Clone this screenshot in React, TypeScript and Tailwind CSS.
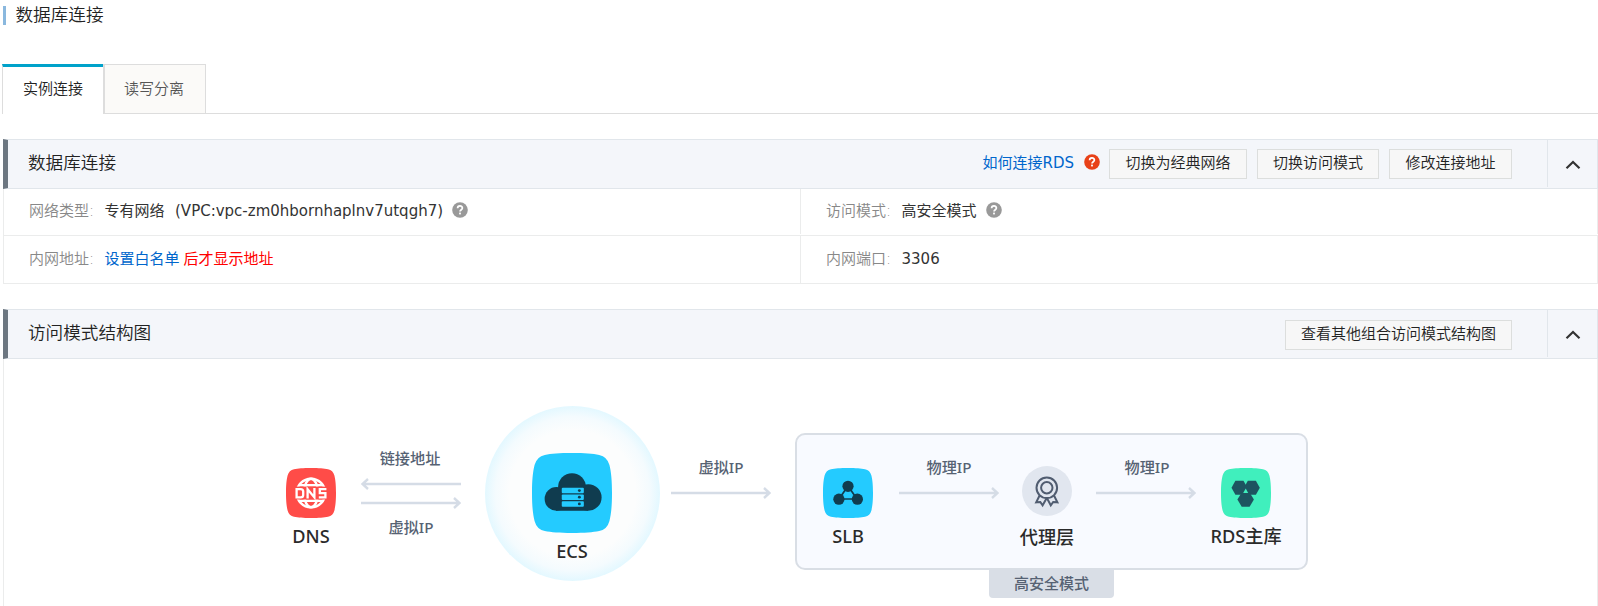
import React from "react";

const SQUIRCLE =
  "M25 0C33 0 38 .4 42 1.2Q47 2.2 48.4 7.5C49.5 12 50 17 50 25C50 33 49.5 38 48.4 42.5Q47 47.8 42 48.8C38 49.6 33 50 25 50C17 50 12 49.6 8 48.8Q3 47.8 1.6 42.5C.5 38 0 33 0 25C0 17 .5 12 1.6 7.5Q3 2.2 8 1.2C12 .4 17 0 25 0Z";

const CANVAS_FONT = "font-['Noto_Sans','Noto_Sans_CJK_SC',sans-serif]";

function HelpIcon({ className }: { className: string }) {
  return (
    <svg viewBox="0 0 16 16" className={`size-4 shrink-0 ${className}`}>
      <circle cx="8" cy="8" r="7.8" fill="currentColor" />
      <path d="M5.6 6.3C5.6 3.2 10.4 3.2 10.4 6.1C10.4 7.7 8 7.8 8 9.6" fill="none" stroke="#fff" strokeWidth="1.7" />
      <rect x="7.1" y="10.6" width="1.8" height="1.8" fill="#fff" />
    </svg>
  );
}

function Button({ children, className = "" }: { children: React.ReactNode; className?: string }) {
  return (
    <button className={`flex h-[30px] items-center justify-center border border-[#dcdedd] bg-[#f7f7f7] pb-[2px] text-[15px] font-[350] whitespace-nowrap text-[#222] ${className}`}>
      {children}
    </button>
  );
}

function Panel({ title, actions, children }: { title: string; actions: React.ReactNode; children: React.ReactNode }) {
  return (
    <section>
      <header className="flex h-[50px] border-y border-r border-l-5 border-y-[#e1e6eb] border-r-[#e1e6eb] border-l-[#6d7781] bg-[#f4f6fa]">
        <h2 className="flex-1 pt-[10px] pl-5 text-[17.6px] leading-[26px] font-[350] text-[#222]">{title}</h2>
        <div className="mr-[35px] flex items-center">{actions}</div>
        <div className="mb-px flex w-[50px] items-center justify-center border-l border-[#e1e6eb] pt-[2px]">
          <svg viewBox="0 0 16 9" className="h-[9px] w-4" fill="none" stroke="#333" strokeWidth="2.2">
            <path d="M1.5 8.2L8 2L14.5 8.2" />
          </svg>
        </div>
      </header>
      {children}
    </section>
  );
}

function Cell({ label, children }: { label: string; children: React.ReactNode }) {
  return (
    <div className="flex flex-1 items-center border-r border-[#ebecec] pl-[25px] text-[15px] text-[#333]">
      <span className="w-[75.5px] font-[350] text-[#888]">{label}</span>
      {children}
    </div>
  );
}

function Arrow({ className, flip = false }: { className: string; flip?: boolean }) {
  return (
    <svg viewBox="0 0 100 12" className={`absolute h-3 w-[100px] ${flip ? "rotate-180" : ""} ${className}`} fill="none" stroke="#d5dce6" strokeWidth="2.4">
      <path d="M0 6H98M93 1L98.5 6L93 11" />
    </svg>
  );
}

function ArrowLabel({ children, className }: { children: string; className: string }) {
  return (
    <span className={`absolute w-[100px] text-center text-[15.2px] leading-5 font-medium text-[#566273] ${className}`}>{children}</span>
  );
}

function Node({ name, className, children }: { name: string; className: string; children: React.ReactNode }) {
  return (
    <div className={`absolute flex w-[100px] flex-col items-center ${className}`}>
      {children}
      <span className="mt-[5px] text-[18.2px] leading-[26px] font-medium whitespace-nowrap text-[#2a2a2a]">{name}</span>
    </div>
  );
}

function DnsIcon() {
  return (
    <svg viewBox="0 0 50 50" className="size-[50px]">
      <path d={SQUIRCLE} fill="#ff4c48" />
      <g fill="none" stroke="#fff" strokeWidth="2.4">
        <circle cx="25" cy="25" r="14.3" />
        <ellipse cx="25" cy="25" rx="7" ry="14.3" />
        <path d="M13 17.2H37M13 32.8H37" />
      </g>
      <rect x="8" y="18.6" width="34" height="12.9" fill="#ff4c48" />
      <path d="M10.6 21.2H14.6Q17.2 21.2 17.2 23.6V27Q17.2 29.4 14.6 29.4H10.6ZM21.6 30.6V21.2L28.4 29.4V20M40.4 21.2H33.8V25.2H39.4V29.4H32.8" fill="none" stroke="#fff" strokeWidth="2.3" />
    </svg>
  );
}

function EcsIcon() {
  return (
    <svg viewBox="0 0 50 50" className="size-[80px]">
      <path d={SQUIRCLE} fill="#24cbff" />
      <g fill="#103c4f">
        <circle cx="15.3" cy="28.7" r="7.4" />
        <circle cx="25" cy="21.3" r="8.7" />
        <circle cx="35.2" cy="27.8" r="8.3" />
        <rect x="15" y="22" width="20" height="14.1" />
      </g>
      <g fill="#24cbff">
        <rect x="18.6" y="21.7" width="13.8" height="3.5" rx=".6" />
        <rect x="18.6" y="26" width="13.8" height="3.3" rx=".6" />
        <rect x="18.6" y="30.1" width="13.8" height="3.5" rx=".6" />
      </g>
      <g fill="#103c4f">
        <circle cx="29.6" cy="23.5" r=".9" />
        <circle cx="29.6" cy="27.6" r=".9" />
        <circle cx="29.6" cy="31.8" r=".9" />
      </g>
    </svg>
  );
}

function SlbIcon() {
  return (
    <svg viewBox="0 0 50 50" className="size-[50px]">
      <path d={SQUIRCLE} fill="#24cbff" />
      <path d="M25 18L16 31H34Z" fill="none" stroke="#103c4f" strokeWidth="1.7" />
      <g fill="#103c4f">
        <circle cx="25" cy="18.3" r="5.6" />
        <circle cx="15.9" cy="31.2" r="5.6" />
        <circle cx="34.4" cy="31.2" r="5.6" />
      </g>
    </svg>
  );
}

function ProxyIcon() {
  return (
    <svg viewBox="0 0 50 50" className="size-[50px]">
      <circle cx="25" cy="25" r="25" fill="#e1e6ef" />
      <g fill="none" stroke="#505c70" strokeWidth="2">
        <path d="M17.6 29.5L14.2 36.3L18.3 36L20.6 39.3L24.2 33H25.4L28.8 39.3L31.2 36L35.4 36.3L32 29.5" />
        <circle cx="24.8" cy="21.8" r="10.3" fill="#e1e6ef" />
        <circle cx="24.8" cy="21.8" r="5.7" />
      </g>
    </svg>
  );
}

function RdsIcon() {
  return (
    <svg viewBox="0 0 50 50" className="size-[50px]">
      <path d={SQUIRCLE} fill="#40efbd" />
      <g fill="#1d5460">
        <path d="M14.4 12.8H22.5L26.4 19.7L22.5 26.7H14.4L10.5 19.7Z" />
        <path d="M26.8 12.8H34.9L38.8 19.7L34.9 26.7H26.8L22.9 19.7Z" />
        <path d="M20.7 24.4H28.6L32.9 31.6L28.6 38.7H20.7L16.4 31.6Z" />
      </g>
      <path d="M24.7 20.4L27.2 25H22.2Z" fill="#40efbd" />
    </svg>
  );
}

function AccessDiagram() {
  return (
    <div className={`relative h-[247px] border-x border-[#ebecec] ${CANVAS_FONT}`}>
      <Node name="DNS" className="top-[109px] left-[257px]"><DnsIcon /></Node>
      <ArrowLabel className="top-[89px] left-[356px]">链接地址</ArrowLabel>
      <Arrow flip className="top-[119px] left-[357px]" />
      <Arrow className="top-[138px] left-[357px]" />
      <ArrowLabel className="top-[158px] left-[357px]">虚拟IP</ArrowLabel>

      <div className="absolute top-[47px] left-[481px] size-[175px] rounded-full bg-[radial-gradient(closest-side,#fcfdfd_72%,#f4fbfe_88%,#e3f8ff_100%)]" />
      <Node name="ECS" className="top-[94px] left-[518px]"><EcsIcon /></Node>

      <ArrowLabel className="top-[98px] left-[667px]">虚拟IP</ArrowLabel>
      <Arrow className="top-[128px] left-[667px]" />

      <div className="absolute top-[74px] left-[791px] h-[137px] w-[513px] rounded-[10px] border-[2.5px] border-[#d9dee5] bg-[#f8faff]" />
      <div className="absolute top-[210px] left-[985px] h-[29px] w-[125px] rounded-b-[4px] bg-[#d9dee6] pt-[4px] text-center text-[15px] leading-5 font-medium text-[#566273]">高安全模式</div>
      <Node name="SLB" className="top-[109px] left-[794px]"><SlbIcon /></Node>
      <ArrowLabel className="top-[98px] left-[895px]">物理IP</ArrowLabel>
      <Arrow className="top-[128px] left-[895px]" />
      <Node name="代理层" className="top-[107px] left-[993px] gap-[3px]"><ProxyIcon /></Node>
      <ArrowLabel className="top-[98px] left-[1093px]">物理IP</ArrowLabel>
      <Arrow className="top-[128px] left-[1092px]" />
      <Node name="RDS主库" className="top-[109px] left-[1192px]"><RdsIcon /></Node>
    </div>
  );
}

export default function App() {
  return (
    <main className="h-[606px] overflow-hidden bg-white font-['DejaVu_Sans','Noto_Sans_CJK_SC',sans-serif] font-normal">
      <div className="flex h-[64px] pt-[6px] pl-[3px]">
        <div className="h-[19px] w-[3px] bg-[#8ab8de]" />
        <h1 className="-mt-1 pl-[9.5px] text-[17.6px] leading-[26px] font-[350] text-[#222]">数据库连接</h1>
      </div>

      <nav className="ml-[2px] flex h-[50px] text-[15px] font-[350]">
        <a className="w-[101px] border-t-3 border-l border-t-[#00a2ca] border-l-[#ddd] pt-[12px] pl-5 leading-[20px] text-[#222]">实例连接</a>
        <a className="w-[103px] border-t border-r border-b border-l-2 border-[#ddd] bg-[#fbfaf8] pt-[14px] pl-[19px] leading-[20px] text-[#555]">读写分离</a>
        <div className="flex-1 border-b border-[#ddd]" />
      </nav>

      <div className="mt-[25px] ml-[3px] flex flex-col gap-[25px]">
        <Panel
          title="数据库连接"
          actions={
            <>
              <a className="mr-[10px] pb-[2px] text-[15px] text-[#0066cc]">如何连接RDS</a>
              <HelpIcon className="mr-[9px] mb-[5px] text-[#e84118]" />
              <Button className="w-[138px]">切换为经典网络</Button>
              <Button className="ml-[10px] w-[122px]">切换访问模式</Button>
              <Button className="ml-[10px] w-[123px]">修改连接地址</Button>
            </>
          }
        >
          <div className="border-l border-[#ebecec]">
            <div className="flex h-[47px] border-b border-[#ebecec] pb-px">
              <Cell label="网络类型:">
                <span>专有网络</span>
                <span className="ml-[10.5px]">(VPC:vpc-zm0hbornhaplnv7utqgh7)</span>
                <HelpIcon className="mb-[4px] ml-[9px] text-[#999]" />
              </Cell>
              <Cell label="访问模式:">
                <span>高安全模式</span>
                <HelpIcon className="mb-[4px] ml-[9px] text-[#999]" />
              </Cell>
            </div>
            <div className="flex h-[48px] border-b border-[#ebecec]">
              <Cell label="内网地址:">
                <a className="text-[#0066cc]">设置白名单</a>
                <span className="ml-1 text-[#f00]">后才显示地址</span>
              </Cell>
              <Cell label="内网端口:">3306</Cell>
            </div>
          </div>
        </Panel>

        <Panel title="访问模式结构图" actions={<Button className="mt-[2px] w-[227px]">查看其他组合访问模式结构图</Button>}>
          <AccessDiagram />
        </Panel>
      </div>
    </main>
  );
}
